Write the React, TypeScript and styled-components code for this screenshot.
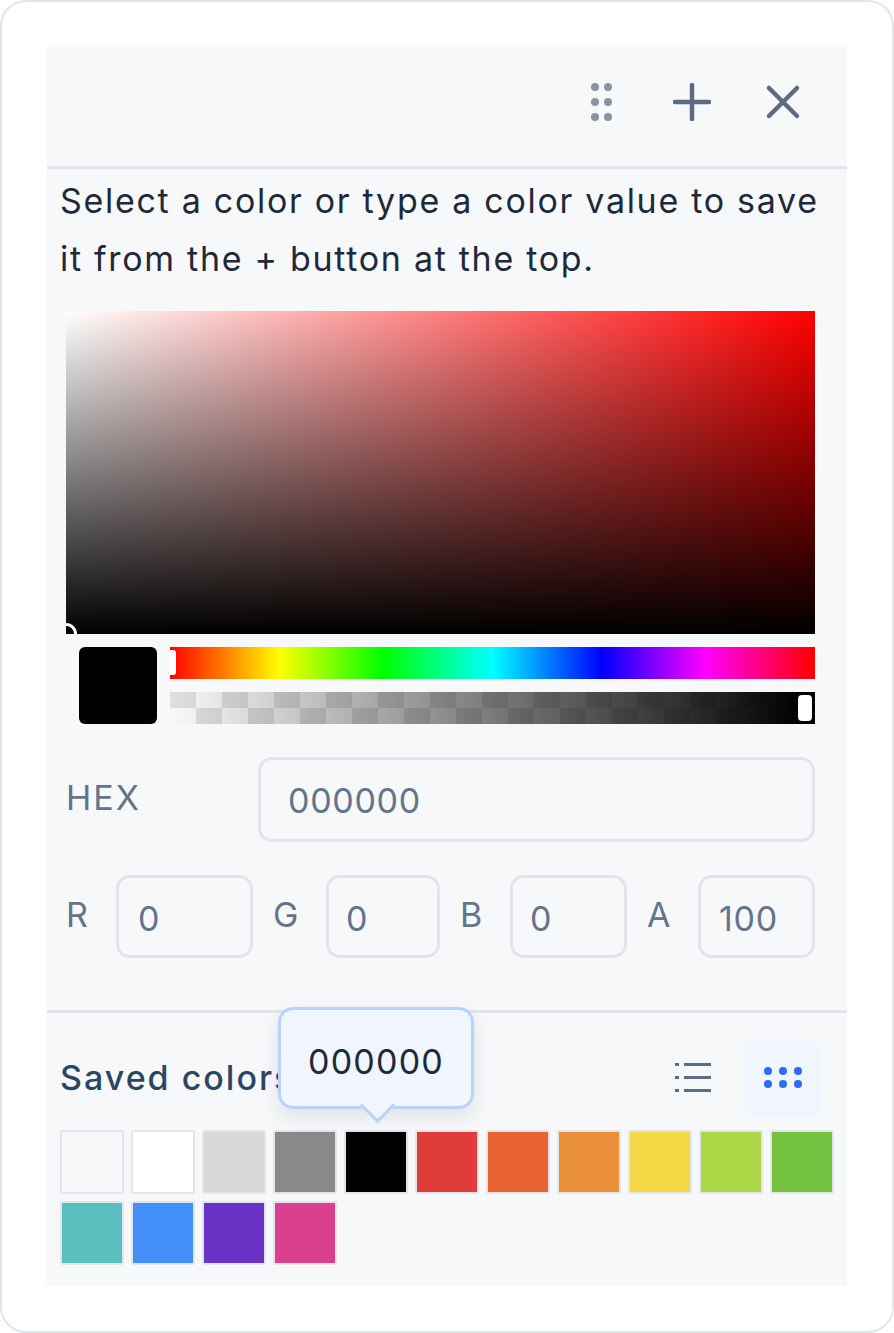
import styled, { createGlobalStyle } from "styled-components";

const GlobalStyle = createGlobalStyle`
  html, body {
    margin: 0;
    padding: 0;
    background: #fff;
  }
  * {
    box-sizing: border-box;
  }
`;

const Frame = styled.div`
  width: 894px;
  height: 1333px;
  padding: 45px;
  border: 2px solid #e2e5ea;
  border-radius: 26px;
  background: #fff;
  font-family: Inter, "Liberation Sans", sans-serif;
`;

const Panel = styled.div`
  width: 800px;
  height: 1239px;
  background: #f7f8fa;
`;

const Header = styled.header`
  height: 122px;
  border-bottom: 3px solid #e2e4e9;
  display: flex;
  align-items: center;
  justify-content: flex-end;
  padding: 0 46px 10px 0;
`;

const IconButton = styled.button<{ $gap?: number }>`
  border: 0;
  padding: 0;
  background: none;
  display: flex;
  margin-left: ${props => props.$gap ?? 0}px;
`;

const Intro = styled.p`
  margin: 3px 0 0;
  padding: 0 13px;
  font-size: 34px;
  line-height: 58px;
  letter-spacing: 1.7px;
  color: #1e293b;
  white-space: nowrap;
`;

const Picker = styled.div`
  margin: 23px 32px 0 19px;
`;

const Saturation = styled.div`
  position: relative;
  overflow: hidden;
  height: 323px;
  background:
    linear-gradient(to bottom, rgba(0, 0, 0, 0), #000),
    linear-gradient(to right, #fff, #f00);
`;

const SaturationHandle = styled.span`
  position: absolute;
  left: -11px;
  bottom: -11px;
  width: 22px;
  height: 22px;
  border: 3px solid #fff;
  border-radius: 50%;
  background: #000;
`;

const SliderRow = styled.div`
  display: flex;
  gap: 13px;
  margin: 13px 0 0 13px;
`;

const Preview = styled.div`
  width: 78px;
  height: 77px;
  flex: none;
  border-radius: 6px;
  background: #000;
`;

const Sliders = styled.div`
  flex: 1;
  display: flex;
  flex-direction: column;
  gap: 13px;
`;

const HueTrack = styled.div`
  position: relative;
  height: 32px;
  background: linear-gradient(
    to right,
    #f00 0%,
    #ff0 17%,
    #0f0 33%,
    #0ff 50%,
    #00f 67%,
    #f0f 83%,
    #f00 100%
  );
`;

const HueThumb = styled.span`
  position: absolute;
  left: 0;
  top: 3px;
  width: 6px;
  height: 25px;
  border-radius: 0 3px 3px 0;
  background: #fff;
`;

const AlphaTrack = styled.div`
  position: relative;
  height: 32px;
  background:
    linear-gradient(to right, rgba(0, 0, 0, 0), #000 98%),
    repeating-conic-gradient(#f8f9fa 0 25%, #dfe1e1 0 50%) 0 0 / 52px 32px;
`;

const AlphaThumb = styled.span`
  position: absolute;
  right: 3px;
  top: 3px;
  width: 14px;
  height: 26px;
  border-radius: 4px;
  background: #fff;
`;

const HexRow = styled.div`
  display: flex;
  align-items: center;
  margin-top: 33px;
`;

const ChannelRow = styled.div`
  display: flex;
  align-items: center;
  margin-top: 33px;
`;

const FieldLabel = styled.label<{ $width: number; $indent?: number }>`
  width: ${props => props.$width}px;
  flex: none;
  padding: 0 0 5px ${props => props.$indent ?? 0}px;
  font-size: 34px;
  letter-spacing: 2px;
  color: #64748b;
`;

const Field = styled.input<{ $width: number; $height: number; $inset: number; $top?: number }>`
  width: ${props => props.$width}px;
  height: ${props => props.$height}px;
  flex: none;
  padding: ${props => props.$top ?? 4}px 0 0 ${props => props.$inset}px;
  border: 3px solid #e2e4e9;
  border-radius: 14px;
  background: transparent;
  font-family: inherit;
  font-size: 34px;
  letter-spacing: 0.7px;
  color: #64748b;
  outline: none;
`;

const SavedSection = styled.section`
  position: relative;
  margin-top: 52px;
  padding: 26px 13px 0;
  border-top: 3px solid #e2e4e9;
`;

const SavedHeader = styled.div`
  display: flex;
  align-items: center;
  justify-content: space-between;
  height: 78px;
  padding-right: 12px;
`;

const SavedTitle = styled.h3`
  margin: 0 0 2px;
  font-size: 34px;
  font-weight: 500;
  letter-spacing: 2px;
  color: #2a4663;
`;

const ViewToggle = styled.div`
  display: flex;
  align-items: center;
  gap: 11px;
`;

const ViewButton = styled.button<{ $active?: boolean }>`
  width: 79px;
  height: 78px;
  border: 0;
  padding: 0;
  display: flex;
  align-items: center;
  justify-content: center;
  border-radius: 16px;
  background: ${props => (props.$active ? "#f0f5fe" : "transparent")};
`;

const Tooltip = styled.div`
  position: absolute;
  left: 231px;
  top: -6px;
  width: 196px;
  height: 102px;
  padding-top: 6px;
  border: 3px solid #b9d2fb;
  border-radius: 15px;
  background: #f0f5fe;
  box-shadow: 0 8px 20px rgba(30, 41, 59, 0.1);
  display: flex;
  align-items: center;
  justify-content: center;
  font-size: 34px;
  letter-spacing: 1.2px;
  color: #1e293b;

  &::after {
    content: "";
    position: absolute;
    left: 50%;
    bottom: -12px;
    width: 22px;
    height: 22px;
    margin-left: -11px;
    transform: rotate(45deg);
    border-right: 3px solid #b9d2fb;
    border-bottom: 3px solid #b9d2fb;
    background: #f0f5fe;
  }
`;

const SwatchGrid = styled.div`
  display: grid;
  grid-template-columns: repeat(11, 64px);
  gap: 7px;
  margin-top: 13px;
`;

const Swatch = styled.div<{ $color: string }>`
  width: 64px;
  height: 64px;
  border: 2px solid #e3e5e9;
  border-radius: 2px;
  background: ${props => props.$color};
`;

const swatches = [
  "#f7f8fa",
  "#ffffff",
  "#d8d8d8",
  "#898989",
  "#000000",
  "#e03c3a",
  "#e86432",
  "#ea903a",
  "#f5da48",
  "#acd848",
  "#72c240",
  "#5bbfc0",
  "#438ef8",
  "#6b32c6",
  "#d94090",
];

const channels = [
  { name: "R", value: "0", labelWidth: 50, indent: 0, width: 137, inset: 19 },
  { name: "G", value: "0", labelWidth: 73, indent: 20, width: 114, inset: 17 },
  { name: "B", value: "0", labelWidth: 70, indent: 20, width: 117, inset: 17 },
  { name: "A", value: "100", labelWidth: 71, indent: 20, width: 117, inset: 18 },
];

export default function App() {
  return (
    <Frame>
      <GlobalStyle />
      <Panel>
        <Header>
          <IconButton aria-label="Move">
            <svg width="21" height="40" viewBox="0 0 21 40" fill="#8893a5">
              <circle cx="4" cy="5" r="4" />
              <circle cx="17" cy="5" r="4" />
              <circle cx="4" cy="20" r="4" />
              <circle cx="17" cy="20" r="4" />
              <circle cx="4" cy="35" r="4" />
              <circle cx="17" cy="35" r="4" />
            </svg>
          </IconButton>
          <IconButton aria-label="Add" $gap={61}>
            <svg width="38" height="38" viewBox="0 0 38 38" stroke="#5c6b83" strokeWidth="4.5" strokeLinecap="round">
              <path d="M19 2v34M2 19h34" />
            </svg>
          </IconButton>
          <IconButton aria-label="Close" $gap={54}>
            <svg width="36" height="36" viewBox="0 0 36 36" stroke="#5c6b83" strokeWidth="4.5" strokeLinecap="round">
              <path d="M4 4l28 28M32 4L4 32" />
            </svg>
          </IconButton>
        </Header>
        <Intro>
          Select a color or type a color value to save
          <br />
          it from the + button at the top.
        </Intro>
        <Picker>
          <Saturation>
            <SaturationHandle />
          </Saturation>
          <SliderRow>
            <Preview />
            <Sliders>
              <HueTrack>
                <HueThumb />
              </HueTrack>
              <AlphaTrack>
                <AlphaThumb />
              </AlphaTrack>
            </Sliders>
          </SliderRow>
          <HexRow>
            <FieldLabel $width={192}>HEX</FieldLabel>
            <Field $width={557} $height={85} $inset={27} $top={2} value="000000" readOnly />
          </HexRow>
          <ChannelRow>
            {channels.map(channel => (
              <div key={channel.name} style={{ display: "contents" }}>
                <FieldLabel $width={channel.labelWidth} $indent={channel.indent}>
                  {channel.name}
                </FieldLabel>
                <Field $width={channel.width} $height={83} $inset={channel.inset} value={channel.value} readOnly />
              </div>
            ))}
          </ChannelRow>
        </Picker>
        <SavedSection>
          <SavedHeader>
            <SavedTitle>Saved colors</SavedTitle>
            <ViewToggle>
              <ViewButton aria-label="List view">
                <svg width="38" height="34" viewBox="0 0 38 34" fill="#5f6d84">
                  <rect x="1" y="2" width="4" height="3" />
                  <rect x="1" y="15" width="4" height="3" />
                  <rect x="1" y="28" width="4" height="3" />
                  <rect x="10" y="2" width="27" height="3" />
                  <rect x="10" y="15" width="27" height="3" />
                  <rect x="10" y="28" width="27" height="3" />
                </svg>
              </ViewButton>
              <ViewButton aria-label="Grid view" $active>
                <svg width="40" height="24" viewBox="0 0 40 24" fill="#2f6cf6">
                  <circle cx="5" cy="5" r="4" />
                  <circle cx="20" cy="5" r="4" />
                  <circle cx="35" cy="5" r="4" />
                  <circle cx="5" cy="18" r="4" />
                  <circle cx="20" cy="18" r="4" />
                  <circle cx="35" cy="18" r="4" />
                </svg>
              </ViewButton>
            </ViewToggle>
          </SavedHeader>
          <Tooltip>000000</Tooltip>
          <SwatchGrid>
            {swatches.map((color, index) => (
              <Swatch key={index} $color={color} />
            ))}
          </SwatchGrid>
        </SavedSection>
      </Panel>
    </Frame>
  );
}
